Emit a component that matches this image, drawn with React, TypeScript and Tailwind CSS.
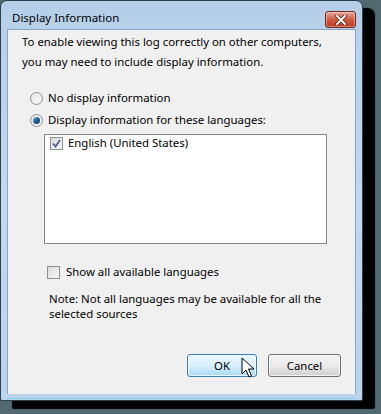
export default function App() {
  return (
    <div
      className="w-[381px] h-[414px] bg-[#51696f] overflow-hidden"
      style={{ fontFamily: '"Noto Sans", "Open Sans", sans-serif' }}
    >
      {/* Window */}
      <div className="w-[363px] h-[401px] rounded-t-[7px] rounded-b-[2px] border border-[#2e3f4d] bg-gradient-to-b from-[#b6cfe9] via-[#c3d8ee] to-[#bcd3ec] shadow-[12px_8px_1px_#000] flex flex-col relative">
        {/* Title bar */}
        <div className="h-[28px] flex items-center justify-between pl-[11px] pr-[6px] pt-[5px]">
          <span className="text-[11.5px] text-black">Display Information</span>
          <button className="w-[31px] h-[17px] mt-[4px] rounded-[3px] border border-[#6d2a1f] bg-gradient-to-b from-[#e6a898] via-[#cf5a44] to-[#c03a22] flex items-center justify-center shadow-[inset_0_0_0_1px_rgba(255,255,255,0.35)]">
            <svg width="12" height="10" viewBox="0 0 12 10">
              <path d="M2 1 L10 9 M10 1 L2 9" stroke="#4a1a10" strokeWidth="3.4" strokeLinecap="square" />
              <path d="M2 1 L10 9 M10 1 L2 9" stroke="#ffffff" strokeWidth="2" strokeLinecap="square" />
            </svg>
          </button>
        </div>

        {/* Client area */}
        <div className="mx-[6px] mb-[6px] flex-1 bg-[#f0f0f0] border border-[#8aa6c4] border-b-0 flex flex-col text-[11.4px] leading-[20px] text-black">
          <div className="pl-[14px] pt-[2px]">
            <p className="leading-[20px]">To enable viewing this log correctly on other computers,</p>
            <p className="leading-[20px]">you may need to include display information.</p>
          </div>

          <div className="pl-[22px] pt-[16px] flex flex-col gap-[2px]">
            <label className="flex items-center gap-[5px]">
              <Radio checked={false} />
              <span>No display information</span>
            </label>
            <label className="flex items-center gap-[5px]">
              <Radio checked />
              <span>Display information for these languages:</span>
            </label>
          </div>

          <div className="ml-[36px] mt-[4px] w-[283px] h-[110px] bg-white border border-[#828790] pl-[5px] pt-[1px]">
            <label className="h-[14px] flex items-center gap-[5px]">
              <Checkbox checked />
              <span>English (United States)</span>
            </label>
          </div>

          <label className="ml-[39px] mt-[18px] flex items-center gap-[6px]">
            <Checkbox checked={false} />
            <span>Show all available languages</span>
          </label>

          <div className="ml-[41px] mt-[9px]">
            <p className="leading-[15px]">Note: Not all languages may be available for all the</p>
            <p className="leading-[15px]">selected sources</p>
          </div>

          <div className="mt-auto mb-[17px] pr-[14px] flex justify-end gap-[11px]">
            <div className="relative">
              <button className="w-[70px] h-[23px] rounded-[3px] border border-[#3c7fb1] bg-gradient-to-b from-[#eaf6fd] via-[#d9f0fc] to-[#a7d9f5] shadow-[inset_0_0_0_1px_rgba(255,255,255,0.7)] text-[11.4px]">
                OK
              </button>
              {/* Mouse pointer */}
              <svg className="absolute left-[54px] top-[3px]" width="15" height="22" viewBox="0 0 15 22">
                <path
                  d="M1 1 L1 17 L5 13 L8 20 L10.5 19 L7.5 12 L13 12 Z"
                  fill="#ffffff"
                  stroke="#000000"
                  strokeWidth="1"
                  strokeLinejoin="round"
                />
              </svg>
            </div>
            <button className="w-[73px] h-[23px] rounded-[3px] border border-[#707070] bg-gradient-to-b from-[#f2f2f2] via-[#ebebeb] to-[#cfcfcf] shadow-[inset_0_0_0_1px_rgba(255,255,255,0.7)] text-[11.4px]">
              Cancel
            </button>
          </div>
        </div>
        <div className="absolute left-[6px] right-[6px] bottom-[1px] h-[1px] bg-[#7fd3ee]" />
      </div>
    </div>
  );
}

function Radio({ checked }: { checked: boolean }) {
  return (
    <span className="w-[13px] h-[13px] rounded-full border border-[#8e8f8f] bg-gradient-to-br from-[#e8e8e8] to-[#f8f8f8] flex items-center justify-center shrink-0">
      {checked && (
        <span className="w-[7px] h-[7px] rounded-full bg-gradient-to-br from-[#6fb8ea] via-[#1b5f9c] to-[#0d3a66]" />
      )}
    </span>
  );
}

function Checkbox({ checked }: { checked: boolean }) {
  return (
    <span className="w-[13px] h-[13px] border border-[#8e8f8f] bg-gradient-to-br from-[#dcdcdc] to-[#f7f7f7] flex items-center justify-center shrink-0">
      {checked && (
        <svg width="9" height="9" viewBox="0 0 9 9">
          <path d="M1 4.5 L3.5 7.5 L8 1" fill="none" stroke="#4a5f97" strokeWidth="1.8" />
        </svg>
      )}
    </span>
  );
}
